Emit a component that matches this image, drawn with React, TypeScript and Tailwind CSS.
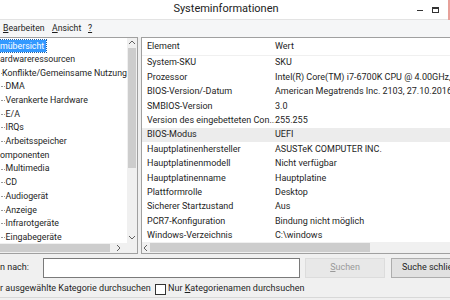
import React from 'react'

const font = { fontFamily: 'Roboto, "Noto Sans", sans-serif' }

const tree = [
  { t: 'mübersicht', l: 0, sel: true },
  { t: 'ardwareressourcen', l: 0 },
  { t: 'Konflikte/Gemeinsame Nutzung', l: 1 },
  { t: 'DMA', l: 1 },
  { t: 'Verankerte Hardware', l: 1 },
  { t: 'E/A', l: 1 },
  { t: 'IRQs', l: 1 },
  { t: 'Arbeitsspeicher', l: 1 },
  { t: 'omponenten', l: 0 },
  { t: 'Multimedia', l: 1 },
  { t: 'CD', l: 1 },
  { t: 'Audiogerät', l: 1 },
  { t: 'Anzeige', l: 1 },
  { t: 'Infrarotgeräte', l: 1 },
  { t: 'Eingabegeräte', l: 1 },
]

const rows = [
  ['System-SKU', 'SKU'],
  ['Prozessor', 'Intel(R) Core(TM) i7-6700K CPU @ 4.00GHz, 4001 MHz'],
  ['BIOS-Version/-Datum', 'American Megatrends Inc. 2103, 27.10.2016'],
  ['SMBIOS-Version', '3.0'],
  ['Version des eingebetteten Con...', '255.255'],
  ['BIOS-Modus', 'UEFI'],
  ['Hauptplatinenhersteller', 'ASUSTeK COMPUTER INC.'],
  ['Hauptplatinenmodell', 'Nicht verfügbar'],
  ['Hauptplatinenname', 'Hauptplatine'],
  ['Plattformrolle', 'Desktop'],
  ['Sicherer Startzustand', 'Aus'],
  ['PCR7-Konfiguration', 'Bindung nicht möglich'],
  ['Windows-Verzeichnis', 'C:\\windows'],
]

function Arrow({ d }: { d: 'up' | 'down' | 'left' | 'right' }) {
  const pts = {
    up: '1,5 4,2 7,5',
    down: '1,2 4,5 7,2',
    left: '5,1 2,4 5,7',
    right: '2,1 5,4 2,7',
  }[d]
  return (
    <svg width="8" height="8" viewBox="0 0 8 8">
      <polyline points={pts} fill="none" stroke="#606060" strokeWidth="1" />
    </svg>
  )
}

export default function App() {
  return (
    <div className="w-[450px] h-[300px] overflow-hidden bg-[#f0f0f0] flex flex-col text-[#1e1e1e]" style={font}>
      {/* title bar */}
      <div className="relative h-[20px] bg-white border-b border-[#e3e3e3] flex items-center justify-center shrink-0">
        <span className="text-[11px] text-[#222] pl-[2px]">Systeminformationen</span>
        <div className="absolute right-0 top-0 h-[20px] flex items-center">
          <div className="w-[20px] flex justify-center">
            <div className="w-[6px] h-[1px] bg-[#333]" />
          </div>
          <div className="w-[10px] flex justify-center">
            <div className="w-[7px] h-[6px] border border-[#333] border-t-2" />
          </div>
          <div className="w-[2px] h-[20px] bg-[#e8a09a] ml-[8px]" />
        </div>
      </div>

      {/* menu bar */}
      <div className="h-[17px] bg-[#f5f6f7] flex items-center pl-[3px] text-[8.7px] shrink-0">
        <span className="w-[49px]"><span className="underline">B</span>earbeiten</span>
        <span className="w-[36px]"><span className="underline">A</span>nsicht</span>
        <span className="underline">?</span>
      </div>

      {/* main */}
      <div className="h-[217px] flex shrink-0">
        {/* left tree */}
        <div className="w-[138px] h-full bg-white border border-l-0 border-[#a0a0a0] flex flex-col shrink-0">
          <div className="flex flex-1 min-h-0">
            <div className="flex-1 pt-[1px] text-[8.8px] overflow-hidden">
              {tree.map((n, i) => (
                <div key={i} className="h-[13.7px] flex items-center whitespace-nowrap">
                  {n.l === 1 && <div className="w-[4px] ml-[1px] mr-[0.5px] border-t border-dotted border-[#999]" />}
                  <span
                    className={
                      n.sel
                        ? 'bg-[#3399ff] text-white pr-[2px] leading-[12px] outline-1 outline-dotted outline-[#1a5fa8]'
                        : ''
                    }
                  >
                    {n.t}
                  </span>
                </div>
              ))}
            </div>
            <div className="w-[10px] bg-[#f0f0f0] flex flex-col items-center">
              <div className="h-[10px] flex items-center"><Arrow d="up" /></div>
              <div className="w-[8px] h-[120px] bg-[#cdcdcd]" />
              <div className="flex-1" />
              <div className="h-[10px] flex items-center"><Arrow d="down" /></div>
            </div>
          </div>
          <div className="h-[10px] flex bg-[#f0f0f0]">
            <div className="w-[110px] h-[8px] mt-[1px] bg-[#cdcdcd]" />
            <div className="flex-1 flex items-center justify-center"><Arrow d="right" /></div>
            <div className="w-[10px] bg-[#f0f0f0]" />
          </div>
        </div>

        <div className="w-[3px] shrink-0" />

        {/* right list */}
        <div className="flex-1 h-full bg-white border border-r-0 border-[#a0a0a0] flex flex-col min-w-0">
          <div className="flex-1 overflow-hidden text-[9px]">
            <div className="h-[18px] flex items-center border-b border-[#f0f0f0]">
              <span className="w-[133px] pl-[5px]">Element</span>
              <span>Wert</span>
            </div>
            {rows.map((r, i) => (
              <div key={i} className={'h-[14.4px] flex items-center whitespace-nowrap ' + (i === 5 ? 'bg-[#ececec]' : '')}>
                <span className="w-[133px] pl-[5px] shrink-0 overflow-hidden">{r[0]}</span>
                <span>{r[1]}</span>
              </div>
            ))}
          </div>
          <div className="h-[11px] flex bg-[#f0f0f0] items-center">
            <div className="w-[8px] flex justify-center"><Arrow d="left" /></div>
            <div className="w-[220px] h-[9px] bg-[#cdcdcd]" />
          </div>
        </div>
      </div>

      {/* search row */}
      <div className="flex items-center h-[22px] mt-[3px] text-[9px] shrink-0">
        <span className="w-[43px] shrink-0">n nach:</span>
        <div className="w-[257px] h-[20px] shrink-0 bg-white border border-[#7a7a7a]" />
        <div className="w-[80px] h-[20px] shrink-0 ml-[5px] bg-[#e8e8e8] border border-[#dcdcdc] flex items-center justify-center text-[#9a9a9a]">
          <span><span className="underline">S</span>uchen</span>
        </div>
        <div className="w-[70px] h-[20px] shrink-0 ml-[6px] bg-[#e1e1e1] border border-[#adadad] flex items-center pl-[10px] whitespace-nowrap">
          Suche schließen
        </div>
      </div>

      {/* checkbox row */}
      <div className="flex items-center h-[16px] mt-[2px] text-[9px] whitespace-nowrap shrink-0">
        <span className="w-[155px] shrink-0">r ausgewählte Kategorie durchsuchen</span>
        <div className="w-[11px] h-[11px] shrink-0 bg-white border border-[#333]" />
        <span className="ml-[2px]">Nur <span className="underline">K</span>ategorienamen durchsuchen</span>
      </div>
      <div className="flex-1" />
      <div className="h-[1px] bg-[#d8d8d8] mb-[2px]" />
    </div>
  )
}
